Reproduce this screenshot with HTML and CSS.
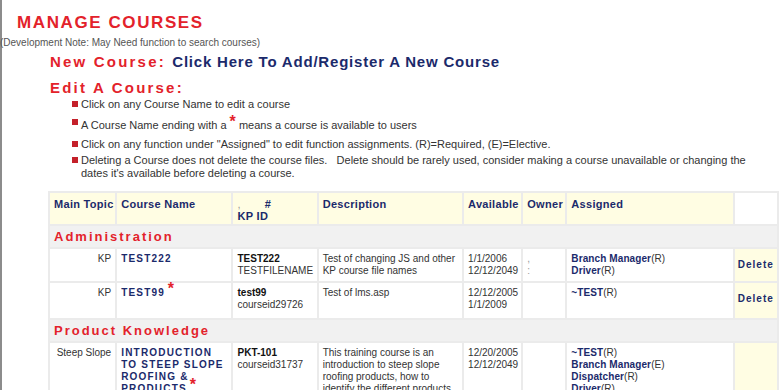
FILE: index.html
```html
<!DOCTYPE html>
<html lang="en">
<head>
    <meta charset="UTF-8">
    <title>Manage Courses</title>
    <link rel="stylesheet" href="styles.css">
</head>
<body>
<div class="page">
    <h1 class="page-title">MANAGE COURSES</h1>
    <p class="dev-note">(Development Note: May Need function to search courses)</p>

    <h2 class="section-title">New Course: <a href="#" class="add-link">Click Here To Add/Register A New Course</a></h2>
    <h2 class="section-title edit">Edit A Course:</h2>

    <ul class="help-list">
        <li>Click on any Course Name to edit a course</li>
        <li class="tall">A Course Name ending with a <span class="star">*</span> means a course is available to users</li>
        <li>Click on any function under "Assigned" to edit function assignments. (R)=Required, (E)=Elective.</li>
        <li>Deleting a Course does not delete the course files.&nbsp;&nbsp; Delete should be rarely used, consider making a course unavailable or changing the dates it's available before deleting a course.</li>
    </ul>

    <table class="course-table">
        <colgroup>
            <col style="width:65px">
            <col style="width:114px">
            <col style="width:83px">
            <col style="width:143px">
            <col style="width:57px">
            <col style="width:42px">
            <col style="width:165px">
            <col style="width:42px">
        </colgroup>
        <thead>
            <tr>
                <th>Main Topic</th>
                <th>Course Name</th>
                <th><span class="tick">,</span><span class="hash">#</span><br>KP ID</th>
                <th>Description</th>
                <th>Available</th>
                <th>Owner</th>
                <th>Assigned</th>
                <th class="blank"></th>
            </tr>
        </thead>
        <tbody>
            <tr class="topic-row"><td colspan="8">Administration</td></tr>
            <tr>
                <td class="topic">KP</td>
                <td><a href="#" class="course-link">TEST222</a></td>
                <td><b>TEST222</b><br>TESTFILENAME</td>
                <td>Test of changing JS and other KP course file names</td>
                <td>1/1/2006<br>12/12/2049</td>
                <td class="owner">,<br>:</td>
                <td><a href="#" class="fn-link">Branch Manager</a>(R)<br><a href="#" class="fn-link">Driver</a>(R)</td>
                <td class="delete"><a href="#">Delete</a></td>
            </tr>
            <tr class="star-row">
                <td class="topic">KP</td>
                <td><a href="#" class="course-link">TEST99</a> <span class="star">*</span></td>
                <td><b>test99</b><br>courseid29726</td>
                <td>Test of lms.asp</td>
                <td>12/12/2005<br>1/1/2009</td>
                <td class="owner"></td>
                <td><a href="#" class="fn-link">~TEST</a>(R)</td>
                <td class="delete"><a href="#">Delete</a></td>
            </tr>
            <tr class="topic-row"><td colspan="8">Product Knowledge</td></tr>
            <tr>
                <td class="topic">Steep Slope</td>
                <td><a href="#" class="course-link">INTRODUCTION TO STEEP SLOPE ROOFING &amp; PRODUCTS</a> <span class="star">*</span></td>
                <td><b>PKT-101</b><br>courseid31737</td>
                <td>This training course is an introduction to steep slope roofing products, how to identify the different products</td>
                <td>12/20/2005<br>12/12/2049</td>
                <td class="owner"></td>
                <td><a href="#" class="fn-link">~TEST</a>(R)<br><a href="#" class="fn-link">Branch Manager</a>(E)<br><a href="#" class="fn-link">Dispatcher</a>(R)<br><a href="#" class="fn-link">Driver</a>(R)</td>
                <td class="delete"></td>
            </tr>
        </tbody>
    </table>
</div>
</body>
</html>
```

FILE: styles.css
```css
* {
    margin: 0;
    padding: 0;
    box-sizing: border-box;
}

body {
    font-family: "Liberation Sans", Arial, sans-serif;
    font-size: 11px;
    color: #333;
    background: white;
}

.page {
    border-left: 2px solid #8c8c8c;
    min-height: 100vh;
    padding-top: 13px;
}

a {
    text-decoration: none;
}

.page-title {
    margin-left: 15px;
    font-size: 17px;
    line-height: 20px;
    font-weight: bold;
    letter-spacing: 1.6px;
    color: #e3222b;
}

.dev-note {
    margin-top: 4px;
    margin-left: -2px;
    font-size: 10px;
    line-height: 12px;
    color: #555;
}

.section-title {
    margin-left: 48px;
    margin-top: 3px;
    font-size: 15px;
    line-height: 20px;
    font-weight: bold;
    letter-spacing: 2.2px;
    color: #e3222b;
}

.section-title.edit {
    margin-top: 6px;
}

.add-link {
    color: #1b2a6b;
    letter-spacing: 0.8px;
}

.help-list {
    list-style: none;
    margin-left: 70px;
    margin-top: 0;
}

.help-list li {
    position: relative;
    padding-left: 9px;
    line-height: 13px;
    margin-bottom: 3px;
    max-width: 700px;
}

.help-list li::before {
    content: "";
    position: absolute;
    left: 0;
    top: 3px;
    width: 6px;
    height: 6px;
    background: #c4202a;
}

.help-list li.tall {
    padding-top: 5px;
    margin-bottom: 6px;
}

.help-list li.tall::before {
    top: 5px;
}

.star {
    color: #e3222b;
    font-size: 16px;
    font-weight: bold;
    line-height: 8px;
    position: relative;
    top: -2px;
}

.course-table {
    margin-left: 46px;
    margin-top: 11px;
    width: 731px;
    table-layout: fixed;
    border-collapse: separate;
    border-spacing: 2px;
    background: #ebebeb;
    font-size: 10px;
}

.course-table th,
.course-table td {
    background: white;
    text-align: left;
    vertical-align: top;
    padding: 4px 4px;
    line-height: 12px;
}

.course-table th {
    background: #fffde3;
    color: #1b2a6b;
    font-size: 11px;
    letter-spacing: 0.3px;
    white-space: nowrap;
    height: 31px;
    padding: 5px 3px 2px 4px;
}

.course-table th.blank {
    background: white;
}

.tick {
    color: #999;
    font-weight: normal;
}

.hash {
    margin-left: 24px;
}

.topic-row td {
    background: #f1f1f1;
    color: #e3222b;
    font-size: 13px;
    font-weight: bold;
    letter-spacing: 2px;
    padding: 4px 4px 3px;
    line-height: 14px;
}

.course-table td.topic {
    text-align: right;
    padding-left: 2px;
    padding-right: 4px;
}

.star-row td {
    padding-bottom: 7px;
}

.course-link {
    color: #1b2a6b;
    font-weight: bold;
    letter-spacing: 1.2px;
}

.course-table b {
    color: #111;
}

.fn-link {
    color: #1b2a6b;
    font-weight: bold;
    letter-spacing: 0.1px;
}

.owner {
    color: #999;
}

.course-table td.delete {
    background: #fffde3;
    vertical-align: middle;
    padding-left: 3px;
}

.delete a {
    color: #1b2a6b;
    font-weight: bold;
    letter-spacing: 1px;
}
```
